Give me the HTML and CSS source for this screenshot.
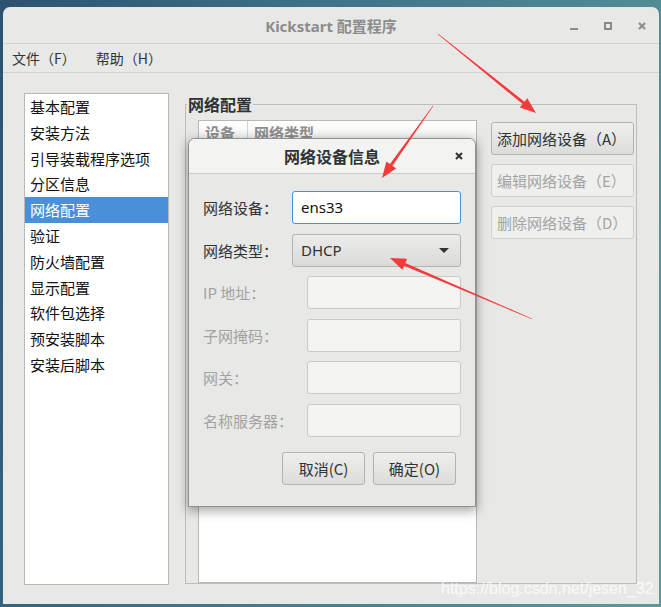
FILE: index.html
```html
<!DOCTYPE html>
<html lang="zh-CN">
<head>
<meta charset="utf-8">
<title>Kickstart 配置程序</title>
<link rel="stylesheet" href="styles.css">
</head>
<body>
<div class="window">
  <div class="titlebar">
    <div></div>
    <div class="title">Kickstart 配置程序</div>
    <div class="controls">
      <svg class="ctl" width="8" height="8" viewBox="0 0 8 8"><rect x="0" y="6" width="8" height="2" fill="#8b8b8b"/></svg>
      <svg class="ctl" width="8" height="8" viewBox="0 0 8 8"><rect x="1" y="1" width="6" height="6" fill="none" stroke="#8b8b8b" stroke-width="2"/></svg>
      <svg class="ctl" width="8" height="8" viewBox="0 0 8 8"><path d="M1 1L7 7M7 1L1 7" stroke="#8b8b8b" stroke-width="2"/></svg>
    </div>
  </div>
  <div class="menubar">
    <span>文件<span class="jp">（</span>F<span class="jp">）</span></span>
    <span>帮助<span class="jp">（</span>H<span class="jp">）</span></span>
  </div>
  <div class="content">
    <ul class="nav">
      <li>基本配置</li>
      <li>安装方法</li>
      <li>引导装载程序选项</li>
      <li>分区信息</li>
      <li class="sel">网络配置</li>
      <li>验证</li>
      <li>防火墙配置</li>
      <li>显示配置</li>
      <li>软件包选择</li>
      <li>预安装脚本</li>
      <li>安装后脚本</li>
    </ul>
    <fieldset class="frame">
      <legend>网络配置</legend>
      <div class="frame-inner">
        <div class="devtable">
          <div class="thead">
            <div class="th c1">设备</div>
            <div class="th c2">网络类型</div>
          </div>
        </div>
        <div class="actions">
          <div class="btn">添加网络设备（A）</div>
          <div class="btn disabled">编辑网络设备（E）</div>
          <div class="btn disabled">删除网络设备（D）</div>
        </div>
      </div>
    </fieldset>
  </div>

  <div class="dialog">
    <div class="dlg-head">
      <div></div>
      <div class="dlg-title">网络设备信息</div>
      <div class="dlg-close">
        <svg width="8" height="8" viewBox="0 0 8 8"><path d="M1 1L7 7M7 1L1 7" stroke="#2e3436" stroke-width="2"/></svg>
      </div>
    </div>
    <div class="dlg-body">
      <div class="form">
        <div class="lbl">网络设备<span class="jp">：</span></div>
        <div class="entry focus">ens33</div>
        <div class="lbl">网络类型<span class="jp">：</span></div>
        <div class="combo"><span>DHCP</span><svg width="10" height="5" viewBox="0 0 10 5"><path d="M0 0H10L5 5Z" fill="#2e3436"/></svg></div>
        <div class="lbl off">IP 地址<span class="jp">：</span></div>
        <div class="entry off"></div>
        <div class="lbl off">子网掩码<span class="jp">：</span></div>
        <div class="entry off"></div>
        <div class="lbl off">网关<span class="jp">：</span></div>
        <div class="entry off"></div>
        <div class="lbl off">名称服务器<span class="jp">：</span></div>
        <div class="entry off"></div>
      </div>
      <div class="dlg-buttons">
        <div class="dbtn">取消(C)</div>
        <div class="dbtn">确定(O)</div>
      </div>
    </div>
  </div>
</div>

<svg class="annot" width="661" height="607" viewBox="0 0 661 607">
  <polygon fill="#f43a3a" points="437.8,34.2 522.6,104.1 519.8,107.6 536,113 527.3,98.3 524.5,101.8 438.2,33.8"/>
  <polygon fill="#f43a3a" points="432.8,105.8 390.0,164.1 386.4,161.5 382,178 396.2,168.4 392.5,165.8 433.2,106.2"/>
  <polygon fill="#f43a3a" points="532.1,318.7 405.3,262.9 407.1,258.8 390,258 402.3,269.8 404.1,265.7 531.9,319.3"/>
</svg>
<div class="watermark">https://blog.csdn.net/jesen_32</div>
</body>
</html>
```

FILE: styles.css
```css
* { box-sizing: border-box; }
html, body { margin: 0; padding: 0; }
body {
  width: 661px;
  height: 607px;
  overflow: hidden;
  position: relative;
  background: linear-gradient(105deg, #2d5270 0%, #3f7388 40%, #5b999c 100%);
  font-family: "Noto Sans", "Noto Sans CJK SC", sans-serif;
  color: #2e3436;
}
.jp { font-family: "Noto Sans CJK JP", "Noto Sans CJK SC", sans-serif; }
.window {
  position: relative;
  margin: 7px 2px 0 3px;
  height: 597px;
  background: #e8e8e7;
  border-radius: 7px 7px 0 0;
}
.titlebar {
  height: 37px;
  border-bottom: 1px solid #d3d3d1;
  display: grid;
  grid-template-columns: 1fr auto 1fr;
  align-items: center;
}
.title {
  font-size: 15px;
  font-weight: bold;
  color: #8c8c8c;
}
.controls {
  display: flex;
  justify-content: flex-end;
  align-items: center;
  gap: 26px;
  padding-right: 13px;
  padding-top: 1px;
}
.ctl { display: block; }
.menubar {
  height: 29px;
  border-bottom: 1px solid #d3d3d1;
  display: flex;
  align-items: center;
  gap: 20px;
  padding-left: 9px;
  font-family: "Noto Sans CJK SC", sans-serif;
  font-size: 14px;
  color: #2e3436;
}
.content {
  display: flex;
  align-items: flex-start;
  padding: 20px 0 0 21px;
}
.nav {
  list-style: none;
  margin: 0;
  padding: 0;
  width: 145px;
  height: 492px;
  background: #fff;
  border: 1px solid #b8b8b6;
  font-family: "Noto Sans CJK SC", sans-serif;
  font-size: 15px;
  color: #111;
}
.nav li {
  height: 25.8px;
  line-height: 25.8px;
  padding-left: 5px;
}
.nav li.sel {
  background: #4a90d9;
  color: #fff;
}
.frame {
  margin: 2px 0 0 16px;
  padding: 0;
  width: 452px;
  height: 489px;
  border: 1px solid #bdbdbb;
  min-width: 0;
}
.frame legend {
  margin-left: 1px;
  padding: 0 1px;
  font-family: "Noto Sans CJK SC", sans-serif;
  font-size: 16px;
  font-weight: bold;
  line-height: 18px;
  color: #2e3436;
}
.frame-inner {
  display: flex;
  align-items: flex-start;
  padding: 7px 0 0 12px;
}
.devtable {
  width: 279px;
  height: 463px;
  background: #fff;
  border: 1px solid #b8b8b6;
}
.thead {
  display: flex;
  height: 24px;
  background: linear-gradient(#ffffff, #f1f1f0);
  border-bottom: 1px solid #dadad8;
}
.th {
  font-family: "Noto Sans CJK SC", sans-serif;
  font-size: 15px;
  font-weight: bold;
  color: #8e8e8e;
  line-height: 24px;
  padding-left: 6px;
}
.th.c1 { width: 49px; border-right: 1px solid #d3d3d1; }
.actions {
  margin: 2px 0 0 14px;
  width: 143px;
  display: flex;
  flex-direction: column;
  gap: 9px;
}
.btn {
  height: 33px;
  line-height: 31px;
  padding-left: 5px;
  border: 1px solid #b3b3b1;
  border-radius: 3px;
  background: linear-gradient(#efefee, #dcdcda);
  font-family: "Noto Sans CJK SC", sans-serif;
  font-size: 15px;
  color: #2e3436;
  white-space: nowrap;
}
.btn.disabled {
  background: #efefee;
  border-color: #cfcfcd;
  color: #a4a4a4;
}
.dialog {
  position: absolute;
  left: 185px;
  top: 131px;
  width: 288px;
  height: 369px;
  background: #e8e8e7;
  border: 1px solid #909090;
  border-radius: 7px 7px 0 0;
  box-shadow: 0 3px 11px 1px rgba(0, 0, 0, 0.35);
}
.dlg-head {
  height: 35px;
  border-bottom: 1px solid #cbcbc9;
  background: #f3f3f2;
  border-radius: 6px 6px 0 0;
  display: grid;
  grid-template-columns: 1fr auto 1fr;
  align-items: center;
}
.dlg-title {
  font-family: "Noto Sans CJK SC", sans-serif;
  font-size: 16px;
  font-weight: bold;
  color: #2e3436;
}
.dlg-close {
  display: flex;
  justify-content: flex-end;
  padding-right: 12px;
}
.dlg-close svg { display: block; }
.dlg-body {
  padding: 17px 14px 20px 14px;
}
.form {
  display: grid;
  grid-template-columns: 89px 1fr;
  grid-auto-rows: 33px;
  row-gap: 9.6px;
  align-items: center;
}
.lbl {
  font-family: "Noto Sans CJK SC", sans-serif;
  font-size: 15px;
  color: #2e3436;
  white-space: nowrap;
}
.lbl.off { color: #a2a2a2; }
.entry {
  height: 33px;
  border: 1px solid #c9c9c7;
  border-radius: 3px;
  background: #f3f3f2;
}
.entry.focus {
  background: #fff;
  border-color: #4a90d9;
  font-size: 15px;
  line-height: 31px;
  padding-left: 8px;
  color: #111;
}
.entry.off { margin-left: 15px; }
.combo {
  height: 33px;
  border: 1px solid #b3b3b1;
  border-radius: 3px;
  background: linear-gradient(#ececeb, #dadad8);
  display: flex;
  align-items: center;
  justify-content: space-between;
  padding: 0 11px 0 8px;
  font-size: 15px;
  color: #2e3436;
}
.combo svg { display: block; }
.dlg-buttons {
  display: flex;
  justify-content: flex-end;
  gap: 8px;
  margin-top: 15px;
  padding-right: 5px;
}
.dbtn {
  width: 83px;
  height: 33px;
  line-height: 31px;
  text-align: center;
  border: 1px solid #b3b3b1;
  border-radius: 3px;
  background: linear-gradient(#efefee, #dcdcda);
  font-family: "Noto Sans CJK SC", sans-serif;
  font-size: 15px;
  color: #2e3436;
}
.annot {
  position: absolute;
  left: 0;
  top: 0;
  pointer-events: none;
}
.watermark {
  position: absolute;
  left: 441px;
  top: 580px;
  font-family: "Liberation Sans", Arial, sans-serif;
  font-size: 16px;
  line-height: 18px;
  color: rgba(255, 255, 255, 0.8);
  white-space: nowrap;
}
```
